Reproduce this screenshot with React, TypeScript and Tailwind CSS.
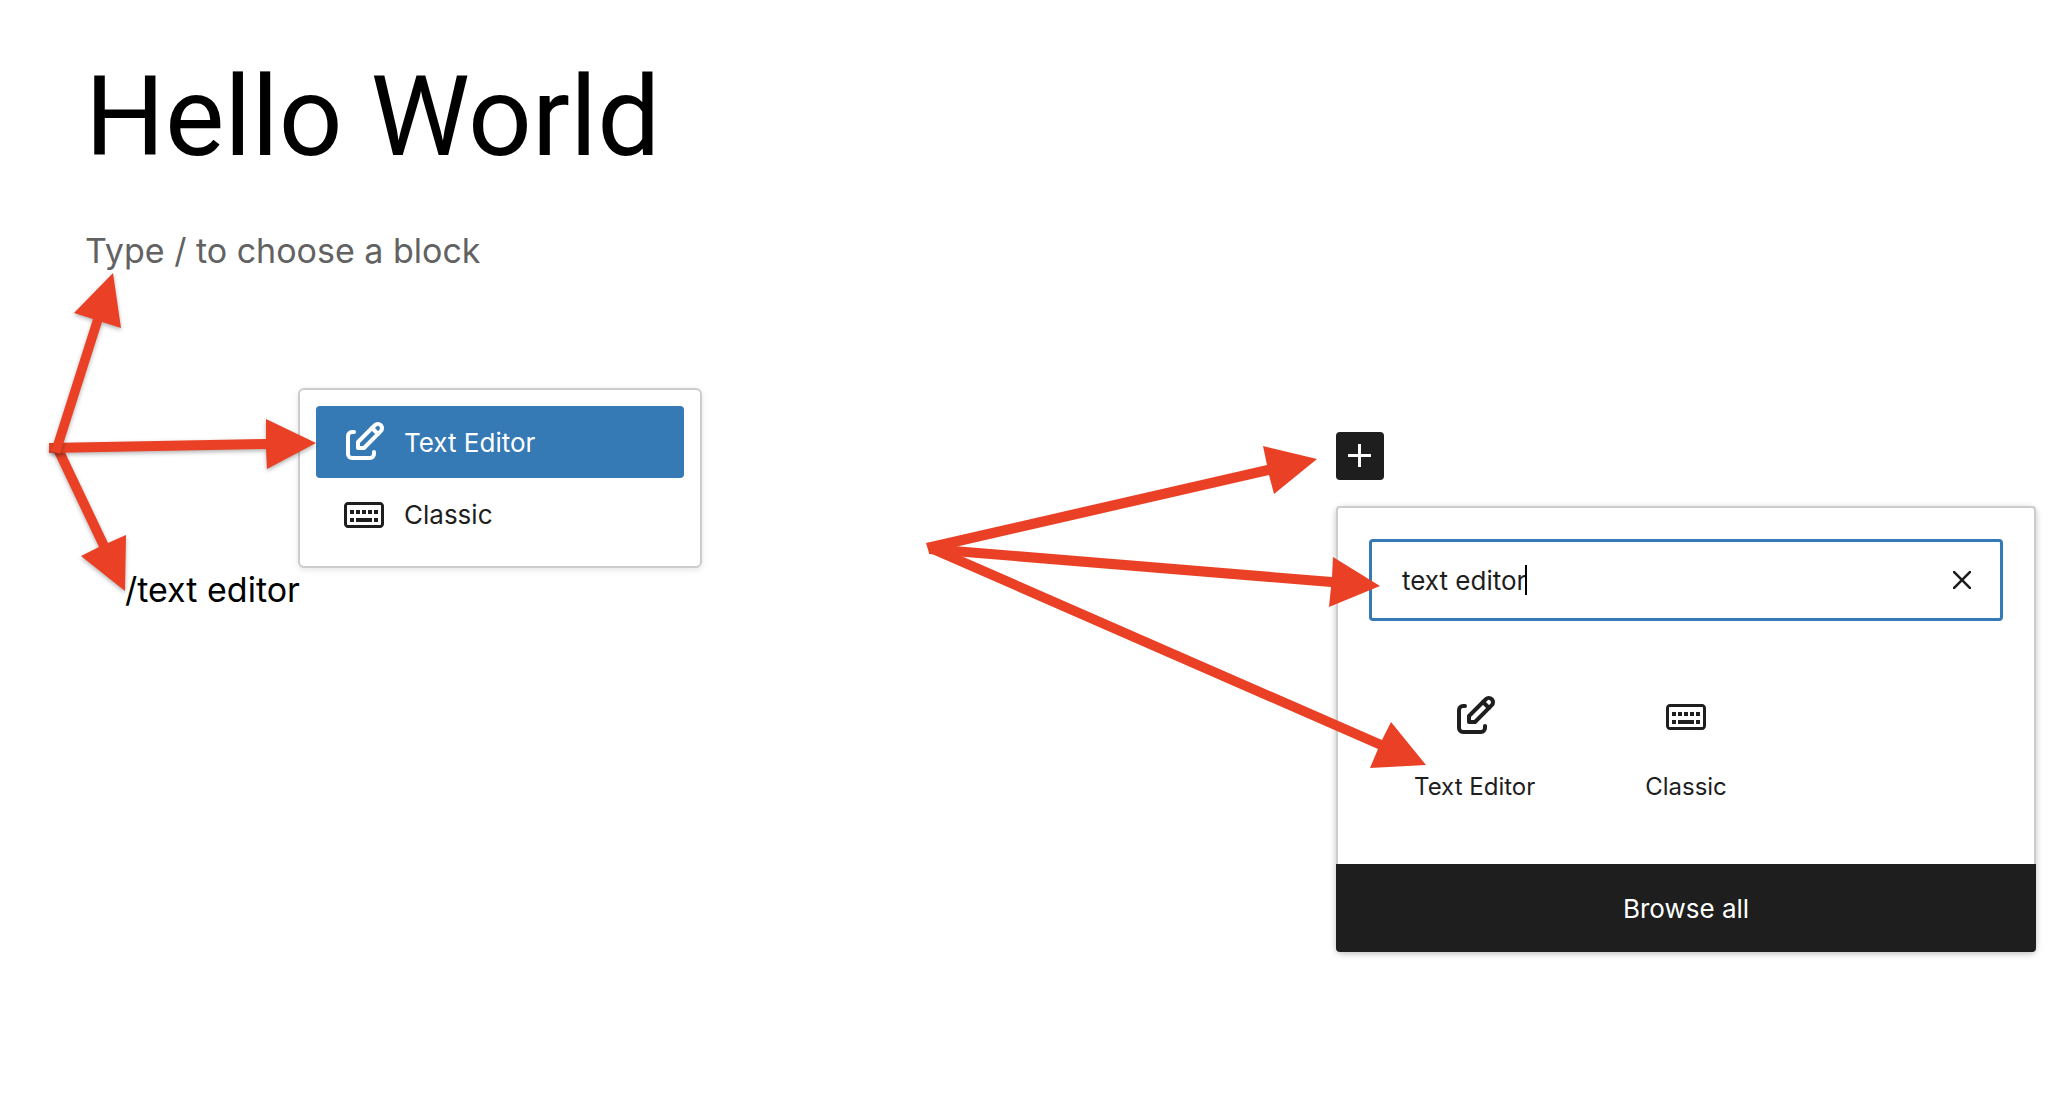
import type { ReactNode } from "react";

function EditIcon() {
  return (
    <svg viewBox="0 0 24 24" className="size-12 shrink-0" fill="none" stroke="currentColor" strokeWidth="2" strokeLinecap="round" strokeLinejoin="round" aria-hidden="true">
      <path d="M7 7H6a2 2 0 0 0-2 2v9a2 2 0 0 0 2 2h9a2 2 0 0 0 2-2v-1" />
      <path d="M20.385 6.585a2.1 2.1 0 0 0-2.97-2.97L9 12v3h3l8.385-8.415z" />
      <path d="M16 5l3 3" />
    </svg>
  );
}

function KeyboardIcon() {
  return (
    <svg viewBox="0 0 24 24" className="size-12 shrink-0" fill="currentColor" aria-hidden="true">
      <path d="M20 6H4c-1.1 0-2 .9-2 2v9c0 1.1.9 2 2 2h16c1.1 0 2-.9 2-2V8c0-1.1-.9-2-2-2zm.5 11c0 .3-.2.5-.5.5H4c-.3 0-.5-.2-.5-.5V8c0-.3.2-.5.5-.5h16c.3 0 .5.2.5.5v9z" />
      <path d="M5 10h2v2H5zM8 10h2v2H8zM11 10h2v2h-2zM14 10h2v2h-2zM17 10h2v2h-2zM5 14h2v2H5zM8 14h8v2H8zM17 14h2v2h-2z" />
    </svg>
  );
}

function MenuItem({ icon, label, selected = false }: { icon: ReactNode; label: string; selected?: boolean }) {
  return (
    <button
      type="button"
      className={
        selected
          ? "flex h-[72px] w-full items-center gap-4 rounded bg-[#3579b5] px-6 text-left text-[26px] text-white"
          : "flex h-[72px] w-full items-center gap-4 rounded px-6 text-left text-[26px] text-[#1e1e1e]"
      }
    >
      {icon}
      {label}
    </button>
  );
}

function BlockTile({ icon, label }: { icon: ReactNode; label: string }) {
  return (
    <button type="button" className="flex flex-col items-center gap-[31px] pb-[30px] pt-[31px] text-2xl text-[#1e1e1e]">
      {icon}
      {label}
    </button>
  );
}

function Arrows() {
  return (
    <svg viewBox="0 0 2066 1094" width="2066" height="1094" className="pointer-events-none absolute left-0 top-0" fill="#ea4126" aria-hidden="true">
      <g className="drop-shadow-[0_2px_2px_rgba(0,0,0,0.3)]">
        <path d="M52 448L99 547L81 556L125 591L126 535L108 543L61 444Z" />
      </g>
      <g className="drop-shadow-[0_2px_2px_rgba(0,0,0,0.3)]">
        <path d="M49 443L266 439L266 419L316 443L267 469L266 449L49 453Z" />
      </g>
      <g className="drop-shadow-[0_2px_2px_rgba(0,0,0,0.3)]">
        <path d="M51 451L93 319L74 313L113 273L121 328L102 322L60 454Z" />
      </g>
      <path d="M926 543L1267 465L1263 446L1317 459L1274 494L1269 475L929 553Z" />
      <path d="M929 544L1332 577L1333 557L1380 586L1329 607L1331 587L929 554Z" />
      <path d="M936 545L1382 740L1391 722L1426 765L1370 768L1378 749L932 554Z" />
    </svg>
  );
}

export default function App() {
  return (
    <main className="relative flex min-h-screen items-start justify-between overflow-hidden bg-white pl-[85px] pr-[30px] font-[Inter,sans-serif] text-black">
      <section className="pt-[53px]">
        <h1 className="font-[Roboto,sans-serif] text-[112px] leading-[128px]">Hello World</h1>
        <p className="mt-[46px] text-[34px] leading-[48px] text-[#626262]">Type / to choose a block</p>
        <div className="ml-[213px] mt-[113px] w-[404px] rounded-md border-2 border-[#ccc] bg-white p-4 shadow-[0_2px_6px_rgba(0,0,0,0.1)]">
          <MenuItem icon={<EditIcon />} label="Text Editor" selected />
          <MenuItem icon={<KeyboardIcon />} label="Classic" />
        </div>
        <p className="ml-10 text-[34px] leading-[44px]">/text editor</p>
      </section>

      <section className="w-[700px] pt-[432px]">
        <button type="button" aria-label="Add block" className="flex size-12 items-center justify-center rounded bg-[#1e1e1e] text-white">
          <svg viewBox="0 0 24 24" className="size-6" stroke="currentColor" strokeWidth="3" aria-hidden="true">
            <path d="M11.5 0v23M0 11.5h23" />
          </svg>
        </button>
        <div className="mt-[26px] rounded-md shadow-[0_2px_6px_rgba(0,0,0,0.25)]">
          <div className="rounded-t border-2 border-b-0 border-[#ccc] bg-white p-[31px]">
            <div className="relative flex h-[82px] items-center rounded border-3 border-[#3579b5] pl-[30px] pr-5">
              <input
                type="text"
                aria-label="Search for a block"
                defaultValue="text editor"
                className="min-w-0 flex-1 text-[26px] text-[#1e1e1e] caret-transparent outline-none"
              />
              <span className="absolute left-[153px] top-[23px] h-[30px] w-[2px] bg-black" />
              <button type="button" aria-label="Reset search" className="flex size-9 items-center justify-center text-[#1e1e1e]">
                <svg viewBox="0 0 18 18" className="size-[18px]" stroke="currentColor" strokeWidth="2.6" aria-hidden="true">
                  <path d="M0 0l18 18M18 0L0 18" />
                </svg>
              </button>
            </div>
            <div className="mt-10 grid grid-cols-3">
              <BlockTile icon={<EditIcon />} label="Text Editor" />
              <BlockTile icon={<KeyboardIcon />} label="Classic" />
            </div>
          </div>
          <button type="button" className="flex h-[88px] w-full items-center justify-center rounded-b bg-[#1e1e1e] text-[26px] text-white">
            Browse all
          </button>
        </div>
      </section>
      <Arrows />
    </main>
  );
}
